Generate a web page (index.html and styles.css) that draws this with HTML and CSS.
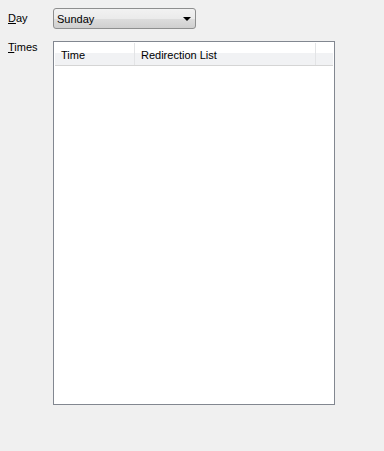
FILE: index.html
```html
<!DOCTYPE html>
<html lang="en">
<head>
  <meta charset="UTF-8">
  <title>Day Times</title>
  <link rel="stylesheet" href="styles.css">
</head>
<body>
  <div class="panel">
    <div class="row">
      <label class="label" for="day"><u>D</u>ay</label>
      <div class="combo" id="day">
        <span class="combo-text">Sunday</span>
        <span class="combo-arrow"></span>
      </div>
    </div>
    <div class="row times-row">
      <label class="label"><u>T</u>imes</label>
      <div class="list">
        <div class="list-header">
          <div class="col col-time">Time</div>
          <div class="col col-redir">Redirection List</div>
          <div class="col col-rest"></div>
        </div>
        <div class="list-body"></div>
      </div>
    </div>
  </div>
</body>
</html>
```

FILE: styles.css
```css
body {
  margin: 0;
  background-color: #f0f0f0;
  font-family: Tahoma, "Liberation Sans", sans-serif;
  font-size: 11px;
  color: #000;
  width: 384px;
  height: 451px;
}

.panel {
  padding: 8px 0 0 8px;
}

.row {
  display: flex;
}

.label {
  width: 45px;
  padding-top: 4px;
}

.label u {
  text-decoration: underline;
}

.combo {
  width: 141px;
  height: 19px;
  border: 1px solid #8e8f8f;
  border-radius: 3px;
  background: linear-gradient(#f2f2f2 0%, #ebebeb 50%, #dddddd 51%, #cfcfcf 100%);
  display: flex;
  align-items: center;
  justify-content: space-between;
  box-sizing: content-box;
}

.combo-text {
  padding-left: 3px;
  padding-top: 1px;
}

.combo-arrow {
  width: 0;
  height: 0;
  border-left: 4px solid transparent;
  border-right: 4px solid transparent;
  border-top: 4px solid #000;
  margin-right: 4px;
}

.times-row {
  margin-top: 12px;
}

.times-row .label {
  padding-top: 0;
}

.list {
  width: 282px;
  height: 364px;
  border: 1px solid #828790;
  background: #fff;
  padding: 1px;
  box-sizing: border-box;
  display: flex;
  flex-direction: column;
}

.list-header {
  display: flex;
  height: 23px;
  background: linear-gradient(#ffffff 0%, #ffffff 45%, #f1f2f4 46%, #f1f2f4 100%);
  border-bottom: 1px solid #d5d5d5;
  box-sizing: border-box;
}

.col {
  display: flex;
  align-items: center;
  padding-left: 6px;
  padding-top: 1px;
  border-right: 1px solid #e3e4e6;
  box-sizing: border-box;
}

.col-time {
  width: 80px;
}

.col-redir {
  width: 181px;
}

.col-rest {
  flex: 1;
  border-right: none;
}

.list-body {
  flex: 1;
}
```
